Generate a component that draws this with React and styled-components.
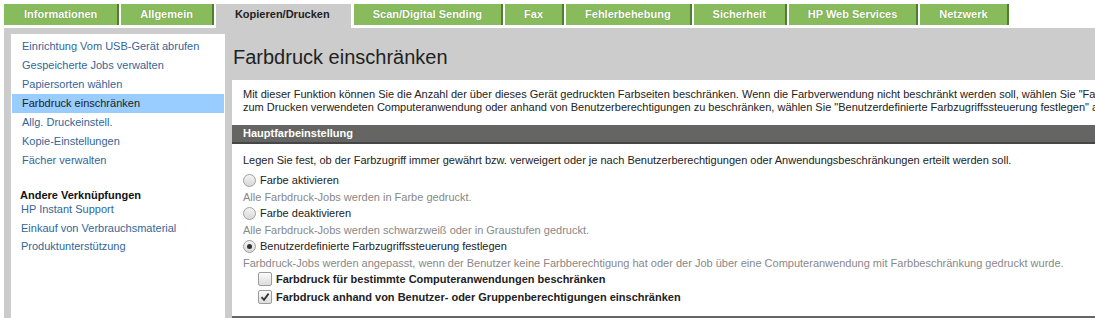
import React from 'react';
import styled, { createGlobalStyle } from 'styled-components';

const GlobalStyle = createGlobalStyle`
  html, body {
    margin: 0;
    padding: 0;
    background: #fff;
    overflow: hidden;
  }
  body {
    font-family: "Liberation Sans", Arial, sans-serif;
    font-size: 11px;
    color: #222;
  }
`

const Page = styled.div`
  width: 1500px;
  height: 100vh;
  display: flex;
  flex-direction: column;
  padding: 4px 0 0 4px;
  box-sizing: border-box;
`

const TabBar = styled.div`
  display: flex;
  align-items: flex-start;
  height: 24px;
  gap: 2px;
`

const Tab = styled.div`
  height: ${p => (p.$active ? '24px' : '21px')};
  line-height: 20px;
  padding: 0 ${p => p.$pad || 19}px;
  font-size: 11px;
  font-weight: bold;
  white-space: nowrap;
  box-sizing: border-box;
  background: ${p => (p.$active ? '#cccccc' : '#87bb5c')};
  color: ${p => (p.$active ? '#222' : '#fff')};
  text-shadow: ${p => (p.$active ? 'none' : '0 0 1px rgba(70, 100, 30, 0.6)')};
  border-right: 2px solid ${p => (p.$active ? '#cccccc' : '#4f7d31')};
  margin-right: ${p => (p.$active ? '1px' : '0')};
`

const Body = styled.div`
  flex: 1;
  background: #cccccc;
  display: flex;
  align-items: stretch;
  gap: 7px;
  padding: 6px 0 0 7px;
  min-height: 0;
`

const Sidebar = styled.nav`
  width: 214px;
  flex-shrink: 0;
  background: #fff;
  padding: 3px 1px 0;
  box-sizing: border-box;
`

const NavItem = styled.div`
  height: 19px;
  line-height: 19px;
  padding-left: 10px;
  font-size: 11px;
  color: ${p => (p.$selected ? '#222' : '#336699')};
  background: ${p => (p.$selected ? '#99ccff' : 'transparent')};
`

const NavHeading = styled.div`
  margin: 18px 0 -2px 8px;
  font-size: 11px;
  font-weight: bold;
  color: #111;
  line-height: 14px;
`

const NavLink = styled.div`
  height: 18.5px;
  line-height: 18px;
  padding-left: 9px;
  font-size: 11px;
  color: #336699;
`

const Main = styled.main`
  flex: 1;
  display: flex;
  flex-direction: column;
`

const Title = styled.h1`
  margin: 0;
  padding: 11px 0 0 1px;
  height: 49px;
  box-sizing: border-box;
  font-size: 20px;
  font-weight: normal;
  line-height: 24px;
  color: #222;
`

const Panel = styled.div`
  background: #fff;
  border-bottom: 2px solid #666;
  display: flex;
  flex-direction: column;
`

const Intro = styled.p`
  margin: 0;
  padding: 8px 11px 11px;
  line-height: 13px;
  white-space: nowrap;
  color: #222;
`

const SectionBar = styled.div`
  height: 17px;
  line-height: 17px;
  background: #656663;
  border-bottom: 2px solid #464646;
  color: #fff;
  font-weight: bold;
  padding-left: 11px;
`

const Section = styled.div`
  padding: 10px 11px 10px;
  display: flex;
  flex-direction: column;
`

const Lead = styled.div`
  line-height: 13px;
  margin-bottom: 4px;
`

const OptionRow = styled.label`
  display: flex;
  align-items: center;
  height: 18px;
  gap: 4px;
  padding-left: ${p => (p.$indent ? '15px' : '0')};
  font-weight: ${p => (p.$bold ? 'bold' : 'normal')};
  color: #222;
`

const Radio = styled.span`
  width: 11px;
  height: 11px;
  border-radius: 50%;
  border: 1px solid #a0a0a0;
  background: linear-gradient(#f4f4f4, #d8d8d8);
  display: flex;
  align-items: center;
  justify-content: center;
  flex-shrink: 0;

  &::after {
    content: '';
    width: 5px;
    height: 5px;
    border-radius: 50%;
    background: ${p => (p.$checked ? '#333' : 'transparent')};
  }
`

const Checkbox = styled.span`
  width: 12px;
  height: 12px;
  border-radius: 2px;
  border: 1px solid #9c9c9c;
  background: linear-gradient(#fbfbfb, #dcdcdc);
  display: flex;
  align-items: center;
  justify-content: center;
  flex-shrink: 0;
`

const Hint = styled.div`
  margin-top: 2px;
  line-height: 13px;
  color: #888;
`

const Option = styled.div`
  display: flex;
  flex-direction: column;
  height: 33px;
`

const tabs = [
  'Informationen',
  'Allgemein',
  'Kopieren/Drucken',
  'Scan/Digital Sending',
  'Fax',
  'Fehlerbehebung',
  'Sicherheit',
  'HP Web Services',
  'Netzwerk',
]

const menu = [
  'Einrichtung Vom USB-Gerät abrufen',
  'Gespeicherte Jobs verwalten',
  'Papiersorten wählen',
  'Farbdruck einschränken',
  'Allg. Druckeinstell.',
  'Kopie-Einstellungen',
  'Fächer verwalten',
]

const links = ['HP Instant Support', 'Einkauf von Verbrauchsmaterial', 'Produktunterstützung']

const options = [
  { label: 'Farbe aktivieren', hint: 'Alle Farbdruck-Jobs werden in Farbe gedruckt.' },
  { label: 'Farbe deaktivieren', hint: 'Alle Farbdruck-Jobs werden schwarzweiß oder in Graustufen gedruckt.' },
  {
    label: 'Benutzerdefinierte Farbzugriffssteuerung festlegen',
    hint: 'Farbdruck-Jobs werden angepasst, wenn der Benutzer keine Farbberechtigung hat oder der Job über eine Computeranwendung mit Farbbeschränkung gedruckt wurde.',
    checked: true,
  },
]

function Check() {
  return (
    <svg width="10" height="10" viewBox="0 0 10 10">
      <path d="M1.5 5.2 L4 7.8 L8.6 1.6" fill="none" stroke="#333" strokeWidth="1.8" />
    </svg>
  )
}

export default function App() {
  return (
    <>
      <GlobalStyle />
      <Page>
        <TabBar>
          {tabs.map((t, i) => (
            <Tab key={t} $active={t === 'Kopieren/Drucken'} $pad={i === 0 ? 20 : 19}>{t}</Tab>
          ))}
        </TabBar>
        <Body>
          <Sidebar>
            {menu.map(m => (
              <NavItem key={m} $selected={m === 'Farbdruck einschränken'}>{m}</NavItem>
            ))}
            <NavHeading>Andere Verknüpfungen</NavHeading>
            {links.map(l => (
              <NavLink key={l}>{l}</NavLink>
            ))}
          </Sidebar>
          <Main>
            <Title>Farbdruck einschränken</Title>
            <Panel>
              <Intro>
                Mit dieser Funktion können Sie die Anzahl der über dieses Gerät gedruckten Farbseiten beschränken. Wenn die Farbverwendung nicht beschränkt werden soll, wählen Sie "Farbe aktivieren". Um den Farbzugriff anhand der
                <br />
                zum Drucken verwendeten Computeranwendung oder anhand von Benutzerberechtigungen zu beschränken, wählen Sie "Benutzerdefinierte Farbzugriffssteuerung festlegen" aus.
              </Intro>
              <SectionBar>Hauptfarbeinstellung</SectionBar>
              <Section>
                <Lead>
                  Legen Sie fest, ob der Farbzugriff immer gewährt bzw. verweigert oder je nach Benutzerberechtigungen oder Anwendungsbeschränkungen erteilt werden soll.
                </Lead>
                {options.map(o => (
                  <Option key={o.label}>
                    <OptionRow>
                      <Radio $checked={o.checked} />
                      {o.label}
                    </OptionRow>
                    <Hint>{o.hint}</Hint>
                  </Option>
                ))}
                <OptionRow $indent $bold>
                  <Checkbox />
                  Farbdruck für bestimmte Computeranwendungen beschränken
                </OptionRow>
                <OptionRow $indent $bold>
                  <Checkbox><Check /></Checkbox>
                  Farbdruck anhand von Benutzer- oder Gruppenberechtigungen einschränken
                </OptionRow>
              </Section>
            </Panel>
          </Main>
        </Body>
      </Page>
    </>
  )
}
